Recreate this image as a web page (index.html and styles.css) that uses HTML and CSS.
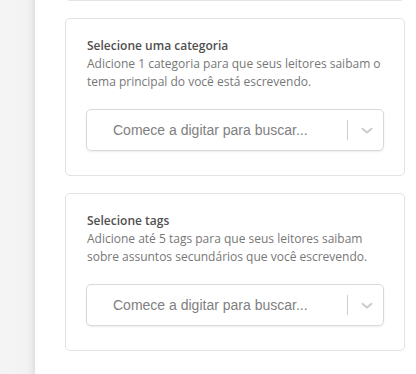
FILE: index.html
```html
<!DOCTYPE html>
<html lang="pt-BR">
<head>
<meta charset="utf-8">
<link rel="stylesheet" href="styles.css">
</head>
<body>
<div class="layout">
  <aside class="sidebar"></aside>
  <main class="content">
    <div class="card card-prev"></div>
    <section class="card">
      <h3 class="card-title">Selecione uma categoria</h3>
      <p class="card-desc">Adicione 1 categoria para que seus leitores saibam o tema principal do você está escrevendo.</p>
      <div class="select">
        <span class="placeholder">Comece a digitar para buscar...</span>
        <span class="sep"></span>
        <span class="chev"><svg width="12" height="8" viewBox="0 0 12 8"><path d="M1.5 1.8 L6 5.6 L10.5 1.8" fill="none" stroke="#cccccc" stroke-width="2" stroke-linecap="round" stroke-linejoin="round"/></svg></span>
      </div>
    </section>
    <section class="card">
      <h3 class="card-title">Selecione tags</h3>
      <p class="card-desc">Adicione até 5 tags para que seus leitores saibam sobre assuntos secundários que você escrevendo.</p>
      <div class="select">
        <span class="placeholder">Comece a digitar para buscar...</span>
        <span class="sep"></span>
        <span class="chev"><svg width="12" height="8" viewBox="0 0 12 8"><path d="M1.5 1.8 L6 5.6 L10.5 1.8" fill="none" stroke="#cccccc" stroke-width="2" stroke-linecap="round" stroke-linejoin="round"/></svg></span>
      </div>
    </section>
  </main>
</div>
</body>
</html>
```
FILE: styles.css
```css
* { box-sizing: border-box; }
html, body { margin: 0; padding: 0; background: #fff; height: 100%; overflow: hidden; }
body { font-family: "Open Sans", sans-serif; }
.layout { display: flex; height: 374px; }
.sidebar {
  width: 35px;
  flex: none;
  background: linear-gradient(to right, #f4f4f4 0, #f3f3f3 27px, #ececec 31px, #e4e4e4 34px, #e2e2e2 35px);
}
.content {
  flex: none;
  width: 340px;
  margin-left: 30px;
  display: flex;
  flex-direction: column;
  gap: 17px;
}
.card {
  border: 1px solid #e3e3e3;
  border-radius: 5px;
  background: #fff;
  padding: 18px 20px 24px 20px;
}
.card-prev {
  height: 10px;
  margin-top: -9px;
  margin-bottom: 0;
  padding: 0;
}
.card-title {
  margin: 0;
  font-size: 12px;
  line-height: 18px;
  font-weight: 550;
  color: #505050;
  padding-left: 1px;
}
.card-desc {
  margin: 0;
  font-size: 12px;
  line-height: 18px;
  color: #777;
  padding-left: 1px;
}
.select {
  margin-top: 18px;
  height: 42px;
  border: 1px solid #d9d9d9;
  border-radius: 5px;
  box-shadow: 0 1px 2px rgba(0,0,0,0.08);
  display: flex;
  align-items: center;
  padding-left: 26px;
}
.placeholder {
  flex: 1;
  font-family: "Liberation Sans", Arial, sans-serif;
  font-size: 14px;
  color: #808080;
}
.sep {
  width: 1px;
  height: 20px;
  background: #cccccc;
  margin-right: 9px;
}
.chev {
  width: 20px;
  margin-right: 6px;
  display: flex;
  justify-content: center;
  align-items: center;
  padding-top: 1px;
}
```
